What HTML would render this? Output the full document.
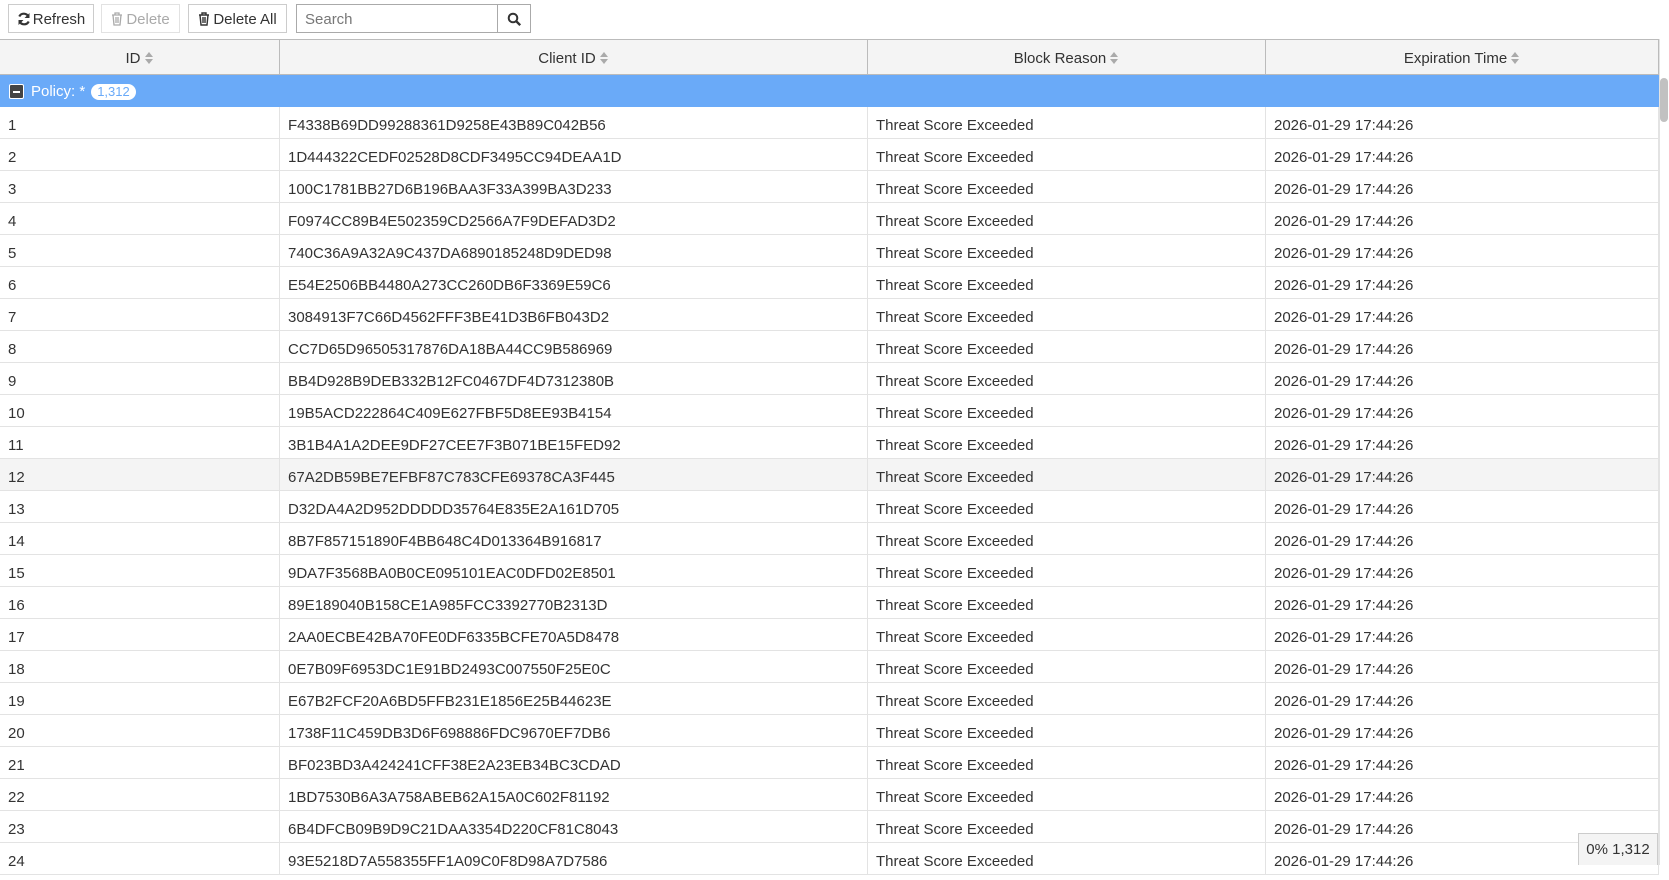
<!DOCTYPE html>
<html><head><meta charset="utf-8"><style>
*{box-sizing:border-box;margin:0;padding:0}
body{width:1669px;height:865px;overflow:hidden;background:#fff;font-family:"Liberation Sans",sans-serif;font-size:15px;color:#333;position:relative}
.btn{position:absolute;top:4px;height:29px;border:1px solid #ccc;background:#fff;display:flex;align-items:center;justify-content:center;font-size:15px;color:#333;padding-top:1px}
.dis{color:#aaa;border-color:#e2e2e2}
.hdr{position:absolute;top:39px;left:0;width:1659px;height:36px;background:#f4f4f4;border-top:1px solid #bbb;border-bottom:1px solid #bbb}
.hc{position:absolute;top:0;height:34px;display:flex;align-items:center;justify-content:center;border-right:1px solid #bbb;padding-top:2px}
.sort{display:inline-block;margin-left:4px;width:9px;height:12px;position:relative}
.sort:before{content:"";position:absolute;left:0;top:0;border-left:4.5px solid transparent;border-right:4.5px solid transparent;border-bottom:5px solid #aaa}
.sort:after{content:"";position:absolute;left:0;bottom:0;border-left:4.5px solid transparent;border-right:4.5px solid transparent;border-top:5px solid #aaa}
.grp{position:absolute;top:75px;left:0;width:1659px;height:32px;background:#6aaaf8;color:#fff;display:flex;align-items:center;padding-top:1px}
.row{position:absolute;left:0;width:1659px;height:32px;border-bottom:1px solid #e3e3e3}
.c{position:absolute;top:0;height:31px;line-height:37px;padding-left:8px;border-right:1px solid #e3e3e3;white-space:nowrap}
</style></head><body>
<div class="btn" style="left:8px;width:86px"><svg width="14" height="14" viewBox="0 0 14 14" style="margin-right:2px"><path d="M11.5 5A5 5 0 0 0 2.3 4.5M2.5 9A5 5 0 0 0 11.7 9.5" stroke="#333" stroke-width="2.2" fill="none"/><path d="M12.5 1v5h-5z M1.5 13V8h5z" fill="#333"/></svg>Refresh</div>
<div class="btn dis" style="left:101px;width:79px"><svg width="12" height="14" viewBox="0 0 12 14" style="margin-right:3px"><path d="M1 3h10M4 3V1h4v2M2 3l1 10h6l1-10M5 5v6M7 5v6" stroke="#aaa" stroke-width="1.3" fill="none"/></svg>Delete</div>
<div class="btn" style="left:188px;width:99px"><svg width="12" height="14" viewBox="0 0 12 14" style="margin-right:3px"><path d="M1 3h10M4 3V1h4v2M2 3l1 10h6l1-10M5 5v6M7 5v6" stroke="#333" stroke-width="1.4" fill="none"/></svg>Delete All</div>
<div class="btn" style="left:296px;width:202px;justify-content:flex-start;padding-left:8px;color:#777;border-color:#aaa">Search</div>
<div class="btn" style="left:497px;width:34px;border-color:#aaa"><svg width="15" height="15" viewBox="0 0 15 15"><circle cx="6" cy="6" r="4.3" stroke="#333" stroke-width="2" fill="none"/><path d="M9.2 9.2l4 4" stroke="#333" stroke-width="2.4"/></svg></div>
<div class="hdr">
<div class="hc" style="left:0;width:280px">ID<span class="sort"></span></div>
<div class="hc" style="left:280px;width:588px">Client ID<span class="sort"></span></div>
<div class="hc" style="left:868px;width:398px">Block Reason<span class="sort"></span></div>
<div class="hc" style="left:1266px;width:393px">Expiration Time<span class="sort"></span></div>
</div>
<div style="position:absolute;left:1659px;top:39px;width:10px;height:826px;background:#fff;border-left:1px solid #e3e3e3"></div>
<div style="position:absolute;left:1660px;top:78px;width:8px;height:44px;background:#c1c1c1;border-radius:4px"></div>
<div class="grp"><span style="display:inline-block;width:15px;height:15px;background:#444;border:1px solid #fff;border-radius:2px;margin-left:9px;position:relative"><span style="position:absolute;left:3px;top:6px;width:7px;height:2px;background:#fff"></span></span><span style="margin-left:7px">Policy: *</span><span style="margin-left:6px;background:#fff;color:#6aaaf8;border-radius:9px;padding:0 6px;font-size:13px;line-height:16px">1,312</span></div>
<div id="rows"></div>
<div style="position:absolute;left:1578px;top:833px;width:80px;height:32px;background:#f4f4f4;border:1px solid #ccc;border-bottom:none;display:flex;align-items:center;justify-content:center">0% 1,312</div>
<script>
var ids=["F4338B69DD99288361D9258E43B89C042B56","1D444322CEDF02528D8CDF3495CC94DEAA1D","100C1781BB27D6B196BAA3F33A399BA3D233","F0974CC89B4E502359CD2566A7F9DEFAD3D2","740C36A9A32A9C437DA6890185248D9DED98","E54E2506BB4480A273CC260DB6F3369E59C6","3084913F7C66D4562FFF3BE41D3B6FB043D2","CC7D65D96505317876DA18BA44CC9B586969","BB4D928B9DEB332B12FC0467DF4D7312380B","19B5ACD222864C409E627FBF5D8EE93B4154","3B1B4A1A2DEE9DF27CEE7F3B071BE15FED92","67A2DB59BE7EFBF87C783CFE69378CA3F445","D32DA4A2D952DDDDD35764E835E2A161D705","8B7F857151890F4BB648C4D013364B916817","9DA7F3568BA0B0CE095101EAC0DFD02E8501","89E189040B158CE1A985FCC3392770B2313D","2AA0ECBE42BA70FE0DF6335BCFE70A5D8478","0E7B09F6953DC1E91BD2493C007550F25E0C","E67B2FCF20A6BD5FFB231E1856E25B44623E","1738F11C459DB3D6F698886FDC9670EF7DB6","BF023BD3A424241CFF38E2A23EB34BC3CDAD","1BD7530B6A3A758ABEB62A15A0C602F81192","6B4DFCB09B9D9C21DAA3354D220CF81C8043","93E5218D7A558355FF1A09C0F8D98A7D7586"];
var h="";ids.forEach(function(id,i){h+='<div class="row" style="top:'+(107+i*32)+'px;'+(i==11?'background:#f4f4f4':'')+'"><div class="c" style="left:0;width:280px">'+(i+1)+'</div><div class="c" style="left:280px;width:588px">'+id+'</div><div class="c" style="left:868px;width:398px">Threat Score Exceeded</div><div class="c" style="left:1266px;width:393px">2026-01-29 17:44:26</div></div>';});
document.getElementById("rows").innerHTML=h;
</script>
</body></html>
